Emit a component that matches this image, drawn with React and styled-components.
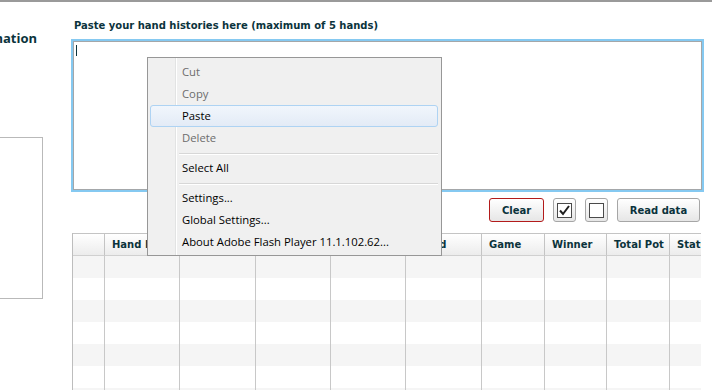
import React from "react";
import styled, { createGlobalStyle } from "styled-components";

const GlobalStyle = createGlobalStyle`
  html, body {
    margin: 0;
    padding: 0;
    background: #ffffff;
    overflow: hidden;
  }
`;

const Page = styled.div`
  position: relative;
  width: 712px;
  height: 390px;
  overflow: hidden;
  font-family: "DejaVu Sans", Verdana, sans-serif;
  color: #0b333c;
`;

const TopStrip = styled.div`
  height: 2px;
  background: #9a9a9a;
`;

const Main = styled.div`
  display: flex;
  align-items: flex-start;
`;

const Side = styled.div`
  margin-left: -140px;
  width: 183px;
  display: flex;
  flex-direction: column;
`;

const SideTitle = styled.div`
  margin-top: 28px;
  padding-right: 6px;
  text-align: right;
  font-family: "Open Sans", "DejaVu Sans", sans-serif;
  font-weight: 700;
  font-size: 13px;
  line-height: 16px;
  white-space: nowrap;
`;

const SidePanel = styled.div`
  margin-top: 91px;
  height: 162px;
  box-sizing: border-box;
  border: 1px solid #b9b9b9;
  background: #ffffff;
`;

const Content = styled.div`
  margin-left: 28px;
  width: 633px;
  display: flex;
  flex-direction: column;
`;

const Label = styled.div`
  margin-top: 18px;
  padding-left: 3px;
  font-weight: 700;
  font-size: 10px;
  line-height: 12px;
  white-space: nowrap;
`;

const PasteBox = styled.div`
  margin: 9px 2px 0 2px;
  height: 149px;
  box-sizing: border-box;
  border: 1px solid #a4a7a9;
  background: #ffffff;
  box-shadow: 0 0 0 2px #85c9f1;
  padding: 3px 2px;
`;

const Caret = styled.div`
  width: 1px;
  height: 11px;
  background: #0b333c;
`;

const ButtonRow = styled.div`
  margin-top: 8px;
  padding-right: 4px;
  display: flex;
  justify-content: flex-end;
  gap: 9px;
`;

const Button = styled.button`
  height: 24px;
  width: ${(p) => p.$w}px;
  box-sizing: border-box;
  padding: 0;
  display: flex;
  align-items: center;
  justify-content: center;
  border: 1px solid ${(p) => (p.$danger ? "#b31b1b" : "#a6a6a6")};
  border-radius: 3px;
  background: linear-gradient(#ffffff, #e6e6e6);
  font-family: "DejaVu Sans", Verdana, sans-serif;
  font-weight: 700;
  font-size: 10px;
  color: #0b333c;
`;

const Grid = styled.div`
  margin: 11px 0 0 1px;
  width: 629px;
  display: grid;
  grid-template-columns: 31px 75px 76px 75px 75px 76px 63px 62px 63px 32px;
  border-left: 1px solid #bdbdbd;
  border-right: 1px solid #bdbdbd;
  box-sizing: border-box;
`;

const HeadCell = styled.div`
  height: 23px;
  box-sizing: border-box;
  padding-left: 7px;
  display: flex;
  align-items: center;
  border-top: 1px solid #c4c4c4;
  border-bottom: 1px solid #d0d0d0;
  border-left: ${(p) => (p.$first ? "none" : "1px solid #c4c4c4")};
  background: linear-gradient(#ffffff, #ececec);
  font-weight: 700;
  font-size: 10px;
  white-space: nowrap;
  overflow: hidden;
`;

const Cell = styled.div`
  height: 22px;
  border-left: ${(p) => (p.$first ? "none" : "1px solid #c8c8c8")};
  background: ${(p) => (p.$shade ? "#f5f5f5" : "#ffffff")};
`;

const Menu = styled.div`
  position: absolute;
  left: 147px;
  top: 57px;
  width: 295px;
  box-sizing: border-box;
  border: 1px solid #979797;
  background: #f0f0f0;
  padding: 3px 3px 2px 2px;
  font-family: "Open Sans", "DejaVu Sans", sans-serif;
  font-size: 11.3px;

  &::before {
    content: "";
    position: absolute;
    left: 27px;
    top: 0;
    bottom: 0;
    width: 1px;
    background: #e2e3e3;
    box-shadow: 1px 0 0 #ffffff;
  }
`;

const Item = styled.div`
  position: relative;
  height: 22px;
  box-sizing: border-box;
  padding: 0 0 2px 31px;
  display: flex;
  align-items: center;
  border: 1px solid ${(p) => (p.$hot ? "#aed3f3" : "transparent")};
  border-radius: 3px;
  background: ${(p) =>
    p.$hot ? "linear-gradient(#f1f6fc, #e3ebf6)" : "transparent"};
  color: ${(p) => (p.$off ? "#6d6d6d" : "#000000")};
`;

const Separator = styled.div`
  position: relative;
  height: 8px;
  margin-left: 29px;
  display: flex;
  align-items: center;

  &::after {
    content: "";
    flex: 1;
    height: 1px;
    background: #d7d7d7;
    box-shadow: 0 1px 0 #ffffff;
  }
`;

const CheckIcon = ({ checked }) => (
  <svg width="15" height="15" viewBox="0 0 15 15">
    <rect x="0.5" y="0.5" width="14" height="14" fill="#ffffff" stroke="#4a4a4a" />
    {checked && (
      <path d="M3 7.5 L6 11 L12 3" fill="none" stroke="#1e1e1e" strokeWidth="2" />
    )}
  </svg>
);

const columns = ["", "Hand ID", "Date", "Table", "Stakes", "Board", "Game", "Winner", "Total Pot", "Status"];

export default function App() {
  const rows = [0, 1, 2, 3, 4, 5, 6];
  return (
    <Page>
      <GlobalStyle />
      <TopStrip />
      <Main>
        <Side>
          <SideTitle>Hand Information</SideTitle>
          <SidePanel />
        </Side>
        <Content>
          <Label>Paste your hand histories here (maximum of 5 hands)</Label>
          <PasteBox>
            <Caret />
          </PasteBox>
          <ButtonRow>
            <Button $w={55} $danger>Clear</Button>
            <Button $w={23}>
              <CheckIcon checked />
            </Button>
            <Button $w={23}>
              <CheckIcon />
            </Button>
            <Button $w={83}>Read data</Button>
          </ButtonRow>
          <Grid>
            {columns.map((c, i) => (
              <HeadCell key={"h" + i} $first={i === 0}>
                {c}
              </HeadCell>
            ))}
            {rows.map((r) =>
              columns.map((c, i) => (
                <Cell key={r + "-" + i} $first={i === 0} $shade={r % 2 === 0} />
              ))
            )}
          </Grid>
        </Content>
      </Main>
      <Menu>
        <Item $off>Cut</Item>
        <Item $off>Copy</Item>
        <Item $hot>Paste</Item>
        <Item $off>Delete</Item>
        <Separator />
        <Item>Select All</Item>
        <Separator />
        <Item>Settings...</Item>
        <Item>Global Settings...</Item>
        <Item>About Adobe Flash Player 11.1.102.62...</Item>
      </Menu>
    </Page>
  );
}
